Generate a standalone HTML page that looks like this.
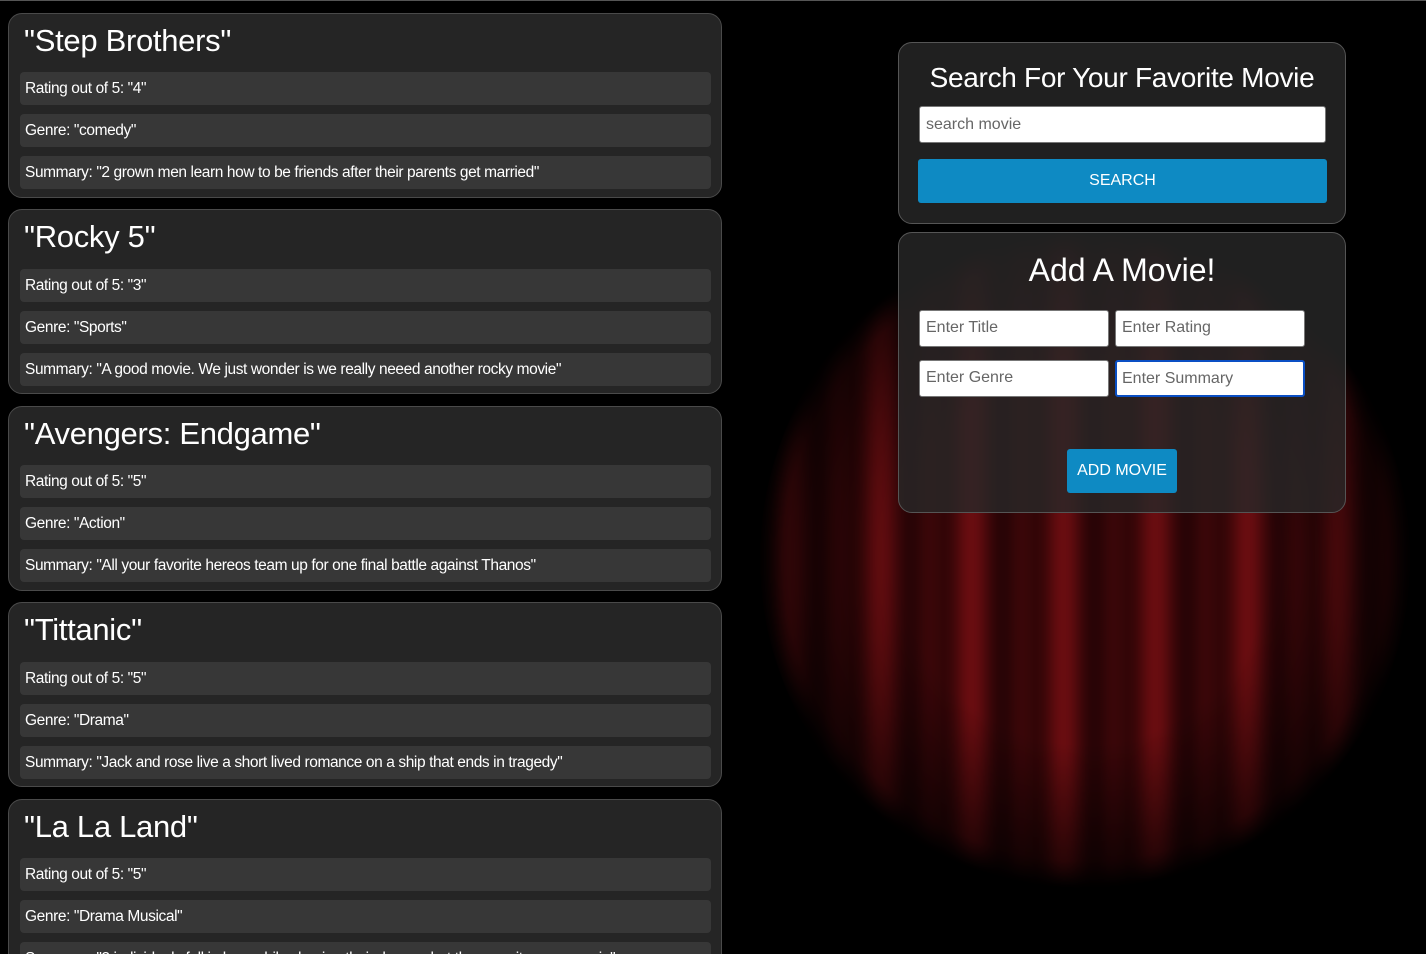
<!DOCTYPE html>
<html style="height:954px;overflow:hidden"><head><style>
*{box-sizing:border-box}
body{margin:0;}
#w{width:1426px;height:954px;overflow:hidden;background:#000;font-family:"Liberation Sans",sans-serif;color:#fff;position:relative;border-top:1px solid #555}
.curtain{position:absolute;left:760px;top:225px;width:650px;height:665px;border-radius:50%;
background:repeating-linear-gradient(90deg,#1a0203 0px,#5a0a0d 18px,#8a1216 28px,#42070a 42px,#140102 60px,#520a0d 78px,#1a0203 92px);
filter:blur(9px);
-webkit-mask-image:radial-gradient(circle,#000 40%,rgba(0,0,0,.4) 65%,transparent 71%);}
.card{position:absolute;left:8px;width:714px;height:185px;background:rgba(38,38,38,.97);border:1px solid #4a4a4a;border-radius:14px}
.card h2{margin:0;position:absolute;left:15px;top:9px;font-size:31px;font-weight:normal;letter-spacing:-0.3px}
.row{position:absolute;left:11px;width:691px;height:33px;background:#373737;border-radius:4px;font-size:15.5px;line-height:33px;padding-left:5px;letter-spacing:-0.4px}
.panel{position:absolute;left:898px;width:448px;background:rgba(40,40,40,.8);border:1px solid #555;border-radius:14px}
.panel h2{margin:0;text-align:center;font-weight:normal}
.inp{position:absolute;background:#fff;border:1px solid #777;border-radius:3px;color:#666;font-size:16px;padding-left:6px;line-height:34px}
.btn{position:absolute;background:#0e8ac3;color:#fff;font-size:16px;text-align:center;border-radius:3px}
</style></head><body><div id="w">
<div class="curtain"></div>

<div class="card" style="top:12px"><h2>"Step Brothers"</h2>
<div class="row" style="top:58px">Rating out of 5: "4"</div>
<div class="row" style="top:100px">Genre: "comedy"</div>
<div class="row" style="top:142px">Summary: "2 grown men learn how to be friends after their parents get married"</div></div>

<div class="card" style="top:208px"><h2>"Rocky 5"</h2>
<div class="row" style="top:59px">Rating out of 5: "3"</div>
<div class="row" style="top:101px">Genre: "Sports"</div>
<div class="row" style="top:143px">Summary: "A good movie. We just wonder is we really neeed another rocky movie"</div></div>

<div class="card" style="top:405px"><h2>"Avengers: Endgame"</h2>
<div class="row" style="top:58px">Rating out of 5: "5"</div>
<div class="row" style="top:100px">Genre: "Action"</div>
<div class="row" style="top:142px">Summary: "All your favorite hereos team up for one final battle against Thanos"</div></div>

<div class="card" style="top:601px"><h2>"Tittanic"</h2>
<div class="row" style="top:59px">Rating out of 5: "5"</div>
<div class="row" style="top:101px">Genre: "Drama"</div>
<div class="row" style="top:143px">Summary: "Jack and rose live a short lived romance on a ship that ends in tragedy"</div></div>

<div class="card" style="top:798px"><h2>"La La Land"</h2>
<div class="row" style="top:58px">Rating out of 5: "5"</div>
<div class="row" style="top:100px">Genre: "Drama Musical"</div>
<div class="row" style="top:142px">Summary: "2 individuals fall in love while chasing their dreams but the pursuit may come in"</div></div>

<div class="panel" style="top:41px;height:182px">
<h2 style="font-size:28px;margin-top:19px;letter-spacing:-0.3px">Search For Your Favorite Movie</h2>
<div class="inp" style="left:20px;top:63px;width:407px;height:37px;line-height:35px">search movie</div>
<div class="btn" style="left:19px;top:116px;width:409px;height:44px;line-height:44px">SEARCH</div>
</div>

<div class="panel" style="top:231px;height:281px">
<h2 style="font-size:32px;margin-top:19px">Add A Movie!</h2>
<div class="inp" style="left:20px;top:77px;width:190px;height:37px">Enter Title</div>
<div class="inp" style="left:216px;top:77px;width:190px;height:37px">Enter Rating</div>
<div class="inp" style="left:20px;top:127px;width:190px;height:37px">Enter Genre</div>
<div class="inp" style="left:216px;top:127px;width:190px;height:37px;border:2px solid #0a4fc4;line-height:33px;padding-left:5px">Enter Summary</div>
<div class="btn" style="left:168px;top:216px;width:110px;height:44px;line-height:44px">ADD MOVIE</div>
</div>
</div></body></html>
